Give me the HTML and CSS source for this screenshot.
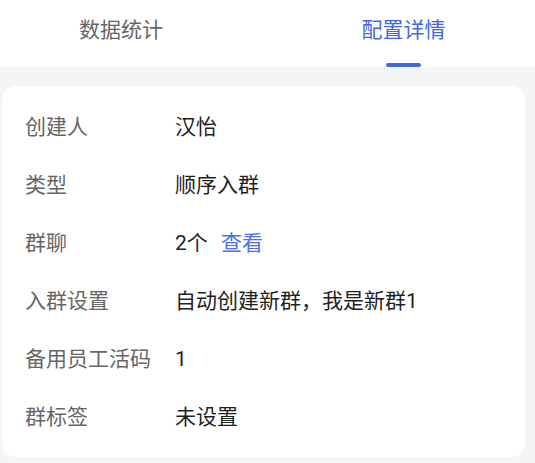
FILE: index.html
```html
<!DOCTYPE html>
<html lang="zh-CN">
<head>
  <meta charset="UTF-8">
  <meta name="viewport" content="width=device-width, initial-scale=1.0">
  <title>配置详情</title>
  <link rel="stylesheet" href="styles.css">
</head>
<body>
  <div class="tabs">
    <div class="tab">
      <span class="tab-text">数据统计</span>
      <span class="tab-line"></span>
    </div>
    <div class="tab active">
      <span class="tab-text">配置详情</span>
      <span class="tab-line"></span>
    </div>
  </div>

  <div class="card">
    <div class="row">
      <span class="label">创建人</span>
      <span class="value">汉怡</span>
    </div>
    <div class="row">
      <span class="label">类型</span>
      <span class="value">顺序入群</span>
    </div>
    <div class="row">
      <span class="label">群聊</span>
      <span class="value">2个 <a class="link" href="#">查看</a></span>
    </div>
    <div class="row">
      <span class="label">入群设置</span>
      <span class="value">自动创建新群，我是新群1</span>
    </div>
    <div class="row">
      <span class="label">备用员工活码</span>
      <span class="value">1</span>
    </div>
    <div class="row">
      <span class="label">群标签</span>
      <span class="value">未设置</span>
    </div>
  </div>
</body>
</html>
```

FILE: styles.css
```css
body {
  margin: 0;
  padding: 0;
  background-color: #f4f5f7;
  font-family: Roboto, "Noto Sans CJK SC", sans-serif;
  overflow: hidden;
}

.tabs {
  display: grid;
  grid-template-columns: 242px 1fr;
  height: 67px;
  background: #fff;
}

.tab {
  display: flex;
  flex-direction: column;
  align-items: center;
  padding-top: 16px;
}

.tab.active {
  padding-left: 30px;
}

.tab-text {
  font-size: 21px;
  line-height: 28px;
  color: #666;
}

.tab-line {
  width: 35px;
  height: 4px;
  margin-top: 19px;
  border-radius: 2px;
  background: transparent;
}

.tab.active .tab-text {
  color: #4169db;
}

.tab.active .tab-line {
  background: #4169db;
}

.card {
  width: 523px;
  margin: 19px 0 0 2px;
  padding: 12px 0 11px 0;
  box-sizing: border-box;
  background: #fff;
  border-radius: 14px;
}

.row {
  display: grid;
  grid-template-columns: 173px 1fr;
  height: 58px;
  line-height: 58px;
  font-size: 21px;
}

.label {
  padding-left: 23px;
  color: #666;
  white-space: nowrap;
}

.value {
  color: #1f1f1f;
  white-space: nowrap;
}

.link {
  margin-left: 8px;
  color: #4a72e0;
  text-decoration: none;
}
```
